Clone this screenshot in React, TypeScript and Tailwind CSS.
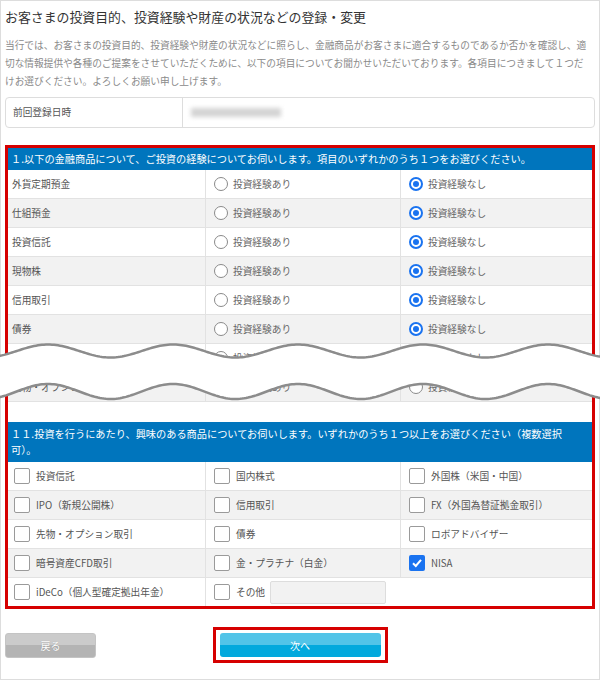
import { Fragment } from "react";

interface ExperienceRow {
  label: string;
  answer: "yes" | "no" | null;
}

const EXPERIENCE_ROWS: ExperienceRow[] = [
  { label: "外貨定期預金", answer: "no" },
  { label: "仕組預金", answer: "no" },
  { label: "投資信託", answer: "no" },
  { label: "現物株", answer: "no" },
  { label: "信用取引", answer: "no" },
  { label: "債券", answer: "no" },
  { label: "外貨建保険", answer: "no" },
  { label: "先物・オプション取引", answer: null },
];

const INTEREST_ROWS: string[][] = [
  ["投資信託", "国内株式", "外国株（米国・中国）"],
  ["IPO（新規公開株）", "信用取引", "FX（外国為替証拠金取引）"],
  ["先物・オプション取引", "債券", "ロボアドバイザー"],
  ["暗号資産CFD取引", "金・プラチナ（白金）", "NISA"],
];

const CHECKED = ["NISA"];

// torn-paper wave drawn over the middle of question 1
function wavePoints(cy: number, amp: number) {
  const pts: string[] = [];
  for (let x = -2; x <= 602; x += 2) {
    const y = cy - amp * Math.cos((2 * Math.PI * (x - 48)) / 125);
    pts.push(`${x},${y.toFixed(2)}`);
  }
  return pts;
}

function Radio({ checked }: { checked: boolean }) {
  if (checked) {
    return (
      <span className="flex h-[14px] w-[14px] shrink-0 items-center justify-center rounded-full border-2 border-[#1a73f0] bg-white">
        <span className="h-[6px] w-[6px] rounded-full bg-[#1a73f0]" />
      </span>
    );
  }
  return <span className="h-[14px] w-[14px] shrink-0 rounded-full border border-[#8a8a8a] bg-white" />;
}

function Checkbox({ checked }: { checked: boolean }) {
  if (checked) {
    return (
      <span className="flex h-[16px] w-[16px] shrink-0 items-center justify-center rounded-[2px] bg-[#1a73f0]">
        <svg width="12" height="12" viewBox="0 0 12 12">
          <polyline points="2,6.2 4.8,9 10,2.8" fill="none" stroke="#fff" strokeWidth="2" />
        </svg>
      </span>
    );
  }
  return <span className="h-[16px] w-[16px] shrink-0 rounded-[2px] border border-[#9a9a9a] bg-white" />;
}

export default function App() {
  const top = wavePoints(14, 6.5);
  const bottom = wavePoints(54.5, 7.5);
  const band = [...top, ...[...bottom].reverse()].join(" ");

  return (
    <div className="h-[680px] w-[600px] border border-[#dddddd] bg-white px-[4px] font-['Noto_Sans_CJK_JP',sans-serif] text-[#555]">
      <h1 className="pt-[8px] text-[12.9px] font-normal leading-[16px] text-[#333]">
        お客さまの投資目的、投資経験や財産の状況などの登録・変更
      </h1>
      <p className="mt-[11px] text-[9.7px] leading-[18px] text-[#8a8a8a]">
        当行では、お客さまの投資目的、投資経験や財産の状況などに照らし、金融商品がお客さまに適合するものであるか否かを確認し、適
        <br />
        切な情報提供や各種のご提案をさせていただくために、以下の項目についてお聞かせいただいております。各項目につきまして１つだ
        <br />
        けお選びください。よろしくお願い申し上げます。
      </p>

      {/* previous registration */}
      <div className="mt-[7px] flex h-[31px] rounded-[4px] border border-[#dddddd]">
        <div className="flex w-[177px] items-center border-r border-[#dddddd] pl-[7px] text-[9.7px] text-[#555]">
          前回登録日時
        </div>
        <div className="flex items-center">
          <div className="ml-[8px] h-[9px] w-[90px] bg-[#d4d4d4] blur-[2px]" />
        </div>
      </div>

      {/* questions */}
      <div className="mt-[17px] border-[3px] border-[#d60000]">
        <div className="flex h-[22px] items-center bg-[#0075bd] px-[3px] text-[10.2px] text-white">
          １.以下の金融商品について、ご投資の経験についてお伺いします。項目のいずれかのうち１つをお選びください。
        </div>
        <div className="relative">
          {EXPERIENCE_ROWS.map((row, i) => (
            <div
              key={row.label}
              className={`grid h-[29px] grid-cols-[197px_195px_1fr] border-b border-[#e2e2e2] text-[9.7px] ${
                i % 2 === 1 ? "bg-[#f2f2f2]" : "bg-white"
              }`}
            >
              <div className="flex items-center pl-[4px] text-[#555]">{row.label}</div>
              <div className="flex items-center gap-[5px] border-l border-[#e2e2e2] pl-[8px] text-[#666]">
                <Radio checked={row.answer === "yes"} />
                投資経験あり
              </div>
              <div className="flex items-center gap-[5px] border-l border-[#e2e2e2] pl-[8px] text-[#666]">
                <Radio checked={row.answer === "no"} />
                投資経験なし
              </div>
            </div>
          ))}
          <svg
            className="absolute left-[-8px] top-[167px]"
            width="600"
            height="70"
            viewBox="0 0 600 70"
          >
            <polygon points={band} fill="#fff" />
            <polyline points={top.join(" ")} fill="none" stroke="#8c8c8c" strokeWidth="2.5" />
            <polyline points={bottom.join(" ")} fill="none" stroke="#8c8c8c" strokeWidth="2.5" />
          </svg>
        </div>

        <div className="mt-[20px] bg-[#0075bd] px-[3px] py-[4px] text-[10.2px] leading-[16px] text-white">
          １１.投資を行うにあたり、興味のある商品についてお伺いします。いずれかのうち１つ以上をお選びください（複数選択
          <br />
          可）。
        </div>
        {INTEREST_ROWS.map((row, i) => (
          <div
            key={i}
            className={`grid h-[29px] grid-cols-[197px_195px_1fr] border-b border-[#e2e2e2] text-[9.7px] text-[#555] ${
              i % 2 === 1 ? "bg-[#f2f2f2]" : "bg-white"
            }`}
          >
            {row.map((item, j) => (
              <div
                key={item}
                className={`flex items-center gap-[6px] ${j === 0 ? "pl-[6px]" : "border-l border-[#e2e2e2] pl-[8px]"}`}
              >
                <Checkbox checked={CHECKED.includes(item)} />
                {item}
              </div>
            ))}
          </div>
        ))}
        <div className="grid h-[28px] grid-cols-[197px_1fr] bg-white text-[9.7px] text-[#555]">
          <div className="flex items-center gap-[6px] pl-[6px]">
            <Checkbox checked={false} />
            iDeCo（個人型確定拠出年金）
          </div>
          <div className="flex items-center border-l border-[#e2e2e2] pl-[8px]">
            <Fragment>
              <Checkbox checked={false} />
              <span className="ml-[6px]">その他</span>
              <span className="ml-[5px] h-[23px] w-[116px] rounded-[2px] border border-[#dddddd] bg-[#f2f2f2]" />
            </Fragment>
          </div>
        </div>
      </div>

      {/* buttons */}
      <div className="mt-[18px] grid grid-cols-[1fr_auto_1fr] items-center">
        <button className="flex h-[25px] w-[91px] items-center justify-center rounded-[3px] border border-[#c4c4c4] bg-[linear-gradient(to_bottom,#cbcbcb_50%,#b4b4b4_50%)] text-[10px] text-white [text-shadow:0_0_1px_rgba(0,0,0,0.25)]">
          戻る
        </button>
        <div className="border-[3px] border-[#d60000] px-[4px] py-[3px]">
          <button className="flex h-[24px] w-[161px] items-center justify-center rounded-[3px] bg-[linear-gradient(to_bottom,#52c4e8_50%,#02a9dd_50%)] text-[10px] text-white">
            次へ
          </button>
        </div>
        <div />
      </div>
    </div>
  );
}
